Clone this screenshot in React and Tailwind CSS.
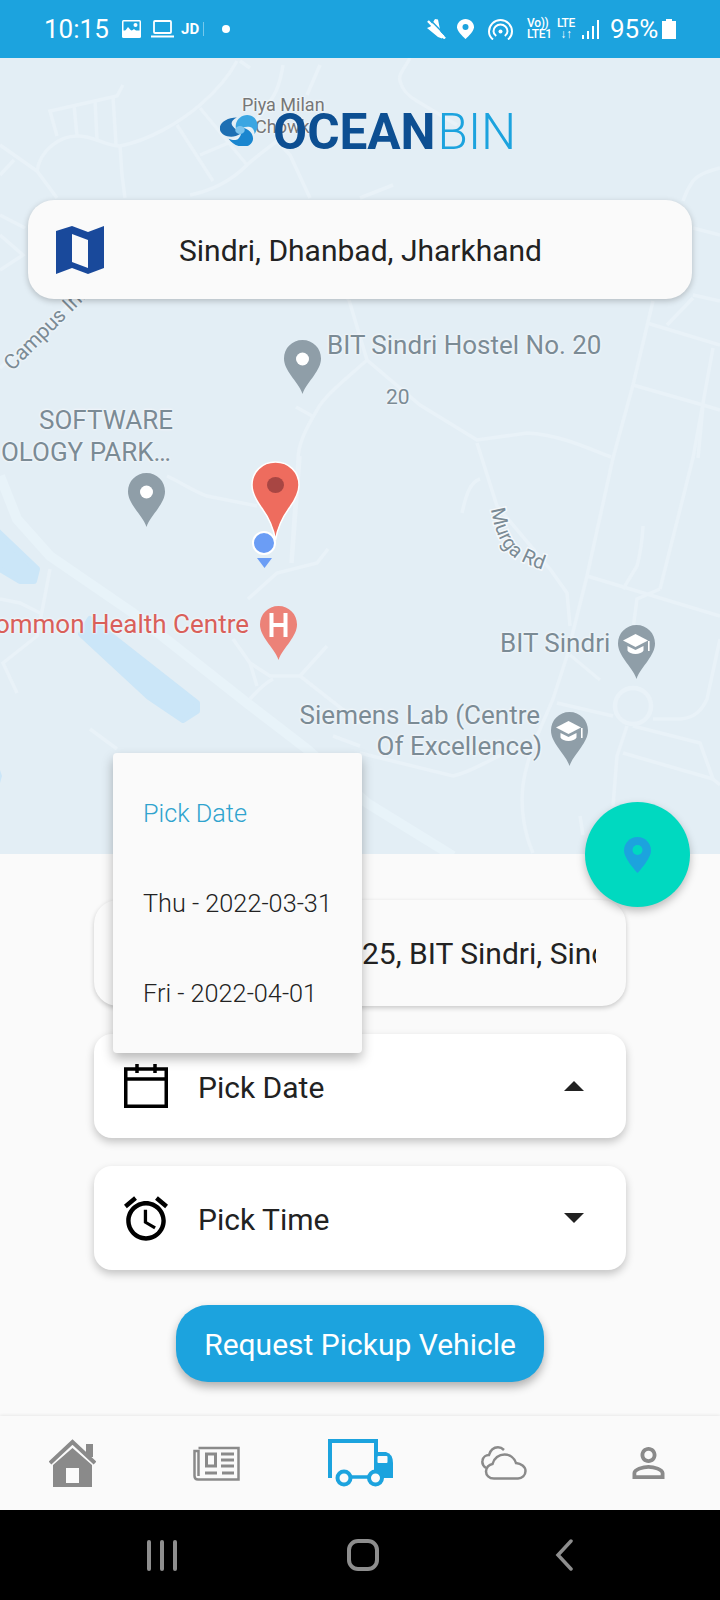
const halo = '[text-shadow:0_0_2px_#f4f8fb,0_0_2px_#f4f8fb,0_0_3px_#f4f8fb]';

function Pin({ className, children, fill = '#8f9ea8' }) {
    return (
        <svg viewBox="0 0 37 54" className={className}>
            <path
                fill={fill}
                d="M18.5 0C8 0 0 8.2 0 18.5c0 6 3 11 7 17 4 6 9 11 11.5 18.5 2.5-7.5 7.5-12.5 11.5-18.5 4-6 7-11 7-17C37 8.2 29 0 18.5 0z"
            />
            {children}
        </svg>
    );
}

function GradCap() {
    return (
        <g fill="#fff">
            <path d="M17.5 9 L5 15.5 L17.5 22 L30 15.5 Z" />
            <path d="M9.5 21v4.5c2 4.5 14 4.5 16 0V21l-8 4z" />
            <rect x="30" y="16" width="1.6" height="10" />
        </g>
    );
}

function MapRoads() {
    const roads = [
        'M0 145L37 171L57 198',
        'M0 175L14 160',
        'M37 171C40 150 60 136 77 136C95 136 105 146 120 146C150 140 180 122 200 105C215 92 228 78 237 61',
        'M57 136L50 111L77 105L117 96L123 85',
        'M74 105L77 136M95 100L97 140M113 97L116 144',
        'M120 146L122 175L125 198',
        'M177 125L213 181',
        'M200 108L247 165',
        'M200 155L240 138',
        'M190 195C215 190 232 180 247 165C258 155 268 148 277 141L290 155L310 198',
        'M240 61L250 68',
        'M283 65C280 85 275 95 270 101C262 115 250 128 243 135',
        'M320 65L307 95',
        'M410 58C405 68 398 74 400 81C403 92 410 97 417 101L457 125',
        'M360 198L393 185',
        'M720 168C705 172 698 175 693 181C688 188 685 195 683 201',
        'M693 228L720 235M693 295L720 301',
        'M653 301L633 385L613 458L587 576L567 656L553 699C540 730 527 755 523 785C520 810 525 835 533 853',
        'M693 298L667 325',
        'M647 323L720 345',
        'M713 348L693 458L660 589',
        'M633 385L703 405L720 410',
        'M703 405L698 458',
        'M349 300L367 360L420 405L477 440L527 433C560 435 585 447 611 457',
        'M367 360C345 380 325 395 317 410C305 430 298 445 298 460L291 563',
        'M296 407L314 417',
        'M477 443L497 506L550 569L567 593L570 626',
        'M480 479C470 482 466 495 462 513',
        'M587 576L720 616',
        'M643 526C642 545 640 555 637 566L623 589',
        'M660 589L637 599L633 629',
        'M557 703L613 716',
        'M653 719H680C695 718 702 710 707 699L720 639',
        'M627 726L617 756L613 806',
        'M633 726L700 743L713 779L720 785',
        'M623 753L713 779',
        'M360 753L453 776C470 772 480 765 493 759C505 752 515 750 520 748',
        'M580 816L583 835',
        'M233 639L250 663L257 686',
        'M250 663L270 676H300L327 646',
        'M250 699C258 690 265 683 273 679',
        'M300 676L360 723',
        'M333 736L360 746',
        'M0 599L20 603L40 613',
        'M50 569L43 606L37 636L3 663L17 693',
        'M167 476C180 482 195 492 207 496L257 506',
        'M300 456L292 563',
        'M328 549L317 563L277 573L248 599',
        'M90 729L117 749',
        'M0 235L23 255L0 270',
        'M0 368L20 350L77 298',
        'M25 228L0 215',
        'M349 300L340 290',
        'M570 655L600 680',
    ];

    return (
        <svg viewBox="0 58 720 796" className="absolute inset-0 h-full w-full">
            <g fill="#cbe6f8" stroke="#cbe6f8" strokeWidth="6" strokeLinejoin="round">
                <path d="M-5 529L37 569L34 581L20 581L-5 566Z" />
                <path d="M81 634L90 619L197 703L197 711L183 720L149 697Z" />
            </g>
            <path fill="#cbe6f8" d="M0 770L2 776L0 783Z" />
            <path
                d="M0 476L17 519L50 556L133 613L247 703L307 749L367 803L453 856"
                fill="none"
                stroke="#e8f3f9"
                strokeWidth="10"
            />
            <circle cx="633" cy="706" r="18" fill="none" stroke="#e9f2f8" strokeWidth="4.500" />
            {roads.map((d) => (
                <path key={d} d={d} fill="none" stroke="#e9f2f8" strokeWidth="3.500" />
            ))}
            <path id="murga" d="M491 509C495 533 503 554 521 561C531 566 541 570 552 572" fill="none" />
            <text
                fontFamily="Roboto, sans-serif"
                fontSize="20"
                fill="#7b8b95"
                stroke="#f4f8fb"
                strokeWidth="3"
                paintOrder="stroke"
            >
                <textPath href="#murga">Murga Rd</textPath>
            </text>
        </svg>
    );
}

function MapLabels() {
    const label = `absolute whitespace-nowrap text-[26px] leading-[30px] text-[#7b8b95] ${halo}`;

    return (
        <>
            <span className={`absolute left-[242px] top-[36px] whitespace-nowrap text-[18px] leading-[22px] text-[#777] ${halo}`}>
                Piya Milan
            </span>
            <span className={`absolute left-[255px] top-[58px] whitespace-nowrap text-[18px] leading-[22px] text-[#777] ${halo}`}>
                Chowk
            </span>
            <span className={`absolute left-[-9px] top-[257px] -rotate-45 whitespace-nowrap text-[21px] leading-[24px] text-[#7b8b95] ${halo}`}>
                Campus Inn
            </span>
            <span className={`${label} left-[327px] top-[272px]`}>BIT Sindri Hostel No. 20</span>
            <span className={`absolute left-[386px] top-[327px] text-[21px] leading-[24px] text-[#7b8b95] ${halo}`}>20</span>
            <span className={`${label} left-[39px] top-[347px]`}>SOFTWARE</span>
            <span className={`${label} right-[549px] top-[379px]`}>OLOGY PARK…</span>
            <span className={`absolute right-[471px] top-[551px] whitespace-nowrap text-[26px] leading-[30px] text-[#d9605a] ${halo}`}>
                Common Health Centre
            </span>
            <span className={`${label} left-[500px] top-[570px]`}>BIT Sindri</span>
            <span className={`${label} right-[180px] top-[642px]`}>Siemens Lab (Centre</span>
            <span className={`${label} right-[178px] top-[673px]`}>Of Excellence)</span>

            <Pin className="absolute left-[284px] top-[282px] h-[54px] w-[37px]">
                <circle cx="18.5" cy="19" r="6.5" fill="#fff" />
            </Pin>
            <Pin className="absolute left-[128px] top-[415px] h-[54px] w-[37px]">
                <circle cx="18.5" cy="19" r="6.5" fill="#fff" />
            </Pin>
            <Pin fill="#ec8278" className="absolute left-[260px] top-[548px] h-[54px] w-[37px]">
                <path fill="#fff" d="M9.500 7h4v10h10V7h4v24h-4V21h-10v10h-4z" />
            </Pin>
            <Pin className="absolute left-[618px] top-[567px] h-[54px] w-[37px]">
                <GradCap />
            </Pin>
            <Pin className="absolute left-[551px] top-[654px] h-[54px] w-[37px]">
                <GradCap />
            </Pin>

            {/* marker yang dipilih + posisi user */}
            <svg viewBox="0 0 49 80" className="absolute left-[251px] top-[403px] h-[80px] w-[49px]">
                <path
                    fill="#ee6c5e"
                    stroke="#fff"
                    strokeWidth="1.500"
                    d="M24.500 1C11 1 1 11 1 24c0 8 4 15 9 22 6 8 12 18 14.500 33 2.500-15 8.500-25 14.500-33 5-7 9-14 9-22C48 11 38 1 24.500 1z"
                />
                <ellipse cx="24.500" cy="24" rx="8.500" ry="8" fill="#a84643" />
            </svg>
            <span className="absolute left-[252px] top-[473px] h-6 w-6 rounded-full border-2 border-white bg-[#6b9df5]" />
            <svg viewBox="0 0 15 10" className="absolute left-[257px] top-[500px] h-[10px] w-[15px]">
                <path d="M0 0H15L7.500 10Z" fill="#6b9df5" />
            </svg>
        </>
    );
}

function OceanLogo() {
    const arm = 'M2 2C-3 0-7-3-8-8-8.500-11-6-14-2-16-12-17-21-11-21-3-21 5-12 9-5 7-1 6 1 4 2 2Z';

    return (
        <svg viewBox="-21 -20 42 40" preserveAspectRatio="none" className="h-[32px] w-10">
            <path fill="#1d6fb3" d={arm} transform="rotate(-5)" />
            <path fill="#3aa6e2" d={arm} transform="rotate(115)" />
            <path fill="#1a86cf" d={arm} transform="rotate(235)" />
            <circle r="5" fill="#7cc4ee" />
        </svg>
    );
}

function StatusBar() {
    return (
        <div className="flex h-[58px] items-center justify-between bg-[#1ca3de] pl-[44px] pr-[44px] text-white">
            <div className="flex items-center">
                <span className="w-[65px] text-[26px] leading-none">10:15</span>
                <svg viewBox="0 0 19 18" className="ml-[13px] h-[18px] w-[19px]">
                    <rect width="19" height="18" rx="1.500" fill="#fff" />
                    <rect x="1.500" y="1.500" width="16" height="9" fill="#1ca3de" />
                    <circle cx="13.500" cy="5" r="2" fill="#fff" />
                    <path d="M1.500 13L6 7l3.500 4L12 9l5.500 5v2.500h-16z" fill="#fff" />
                </svg>
                <svg viewBox="0 0 23 18" className="ml-[10px] h-[18px] w-[23px]">
                    <rect x="3" y="1" width="17" height="12" rx="1" fill="none" stroke="#fff" strokeWidth="1.800" />
                    <rect y="15.500" width="23" height="2" fill="#fff" />
                </svg>
                <span className="ml-[7px] w-5 text-[15px] font-bold leading-none">JD</span>
                <span className="ml-[2px] h-[14px] w-px bg-white/40" />
                <span className="ml-[18px] h-2 w-2 rounded-full bg-white" />
            </div>
            <div className="flex items-center">
                <svg viewBox="0 0 19 20" className="h-5 w-[19px]">
                    <path fill="#fff" d="M8 0L11 .5 13.500 13l4 4-2.500 2.500L11 18 0 9l3.500-1.500z" />
                    <path d="M1 2L18 19.500" stroke="#fff" strokeWidth="2.500" />
                    <path d="M3.200 .8L19.500 17.500" stroke="#1ca3de" strokeWidth="1.500" />
                </svg>
                <svg viewBox="0 0 17 20" className="ml-[11px] h-5 w-[17px]">
                    <path fill="#fff" d="M8.500 0C3.800 0 0 3.700 0 8.300 0 13 8.500 20 8.500 20S17 13 17 8.300C17 3.700 13.200 0 8.500 0z" />
                    <circle cx="8.500" cy="8" r="3" fill="#1ca3de" />
                </svg>
                <svg viewBox="0 0 25 21" className="ml-[14px] h-[21px] w-[25px]" fill="none" stroke="#fff" strokeWidth="2">
                    <path d="M5 20.500C2.500 18.500 1 15.500 1 12.500 1 6.200 6.200 1 12.500 1S24 6.200 24 12.500c0 3-1.500 6-4 8" />
                    <path d="M8.200 17C6.500 15.800 5.500 14 5.500 12.200 5.500 8.500 8.700 5.500 12.500 5.500s7 3 7 6.700c0 1.800-1 3.600-2.700 4.800" />
                    <circle cx="12.500" cy="12.500" r="2" fill="#fff" stroke="none" />
                </svg>
                <div className="ml-[14px] flex w-6 flex-col text-[12px] font-medium leading-[11px] tracking-tight">
                    <span>Vo))</span>
                    <span>LTE1</span>
                </div>
                <div className="ml-[5px] flex w-5 flex-col items-center text-[12px] font-medium leading-[11px] tracking-tight">
                    <span>LTE</span>
                    <span className="font-bold">↓↑</span>
                </div>
                <svg viewBox="0 0 18 19" className="ml-[6px] h-[19px] w-[18px]" fill="#fff">
                    <rect x="0" y="15" width="2" height="4" />
                    <rect x="5" y="11" width="2" height="8" />
                    <rect x="10" y="6" width="2" height="13" />
                    <rect x="15" y="0" width="2" height="19" />
                </svg>
                <span className="ml-[10px] w-[47px] text-[26px] leading-none">95%</span>
                <svg viewBox="0 0 14 20" className="ml-[5px] h-5 w-[14px]" fill="#fff">
                    <rect x="4" width="6" height="2" />
                    <rect y="2" width="14" height="18" />
                </svg>
            </div>
        </div>
    );
}

function Dropdown({ label, open, icon }) {
    return (
        <div className="flex h-[104px] w-[532px] items-center rounded-[18px] bg-white pl-[30px] pr-[42px] shadow-[0_4px_8px_rgba(0,0,0,0.22)]">
            {icon}
            <span className="ml-[30px] mt-1 flex-1 text-[30px] leading-none text-[#222]">{label}</span>
            <svg viewBox="0 0 20 10" className="h-[10px] w-5" fill="#222">
                <path d={open ? 'M10 0L20 10H0Z' : 'M0 0H20L10 10Z'} />
            </svg>
        </div>
    );
}

function BottomNav() {
    return (
        <div className="relative grid h-[94px] grid-cols-5 items-center bg-[#fafafa] shadow-[0_-1px_3px_rgba(0,0,0,0.07)]">
            <div className="flex justify-center">
                <svg viewBox="0 0 47 48" className="h-12 w-[47px]">
                    <path d="M1 24L23.500 3L46 24" fill="none" stroke="#8a8a8a" strokeWidth="4" />
                    <rect x="37" y="5" width="7" height="13" fill="#8a8a8a" />
                    <path fillRule="evenodd" fill="#8a8a8a" d="M4 26L23.500 9L43 26V48H4ZM17 29V44H30V29Z" />
                </svg>
            </div>
            <div className="flex justify-center">
                <svg viewBox="0 0 47 36" className="h-9 w-[47px]" fill="none" stroke="#8a8a8a">
                    <path d="M5.500 3H45.500V34.500H5C2.500 34.500 1.500 33 1.500 31V6H5.500V31" strokeWidth="2.500" />
                    <rect x="13.500" y="9" width="9" height="12" strokeWidth="3" />
                    <path d="M28 9H41M28 15H41M28 21H41M12 28H24M29 28H41" strokeWidth="3" />
                </svg>
            </div>
            <div className="flex justify-center">
                <svg viewBox="0 0 65 48" className="h-12 w-[65px]">
                    <path d="M2 39V2H48V39" fill="none" stroke="#1ca3de" strokeWidth="4" />
                    <path d="M48 13H58Q65 15 65 24V39H48Z" fill="#1ca3de" />
                    <rect x="49.500" y="17" width="10" height="7" rx="1" fill="#fafafa" />
                    <path d="M16 38H47" stroke="#1ca3de" strokeWidth="3.500" />
                    <circle cx="16" cy="39" r="6.500" fill="#fafafa" stroke="#1ca3de" strokeWidth="4" />
                    <circle cx="47.500" cy="39" r="6.500" fill="#fafafa" stroke="#1ca3de" strokeWidth="4" />
                </svg>
            </div>
            <div className="flex justify-center">
                <svg viewBox="0 0 46 34" className="h-[34px] w-[46px]" fill="none" stroke="#8a8a8a" strokeWidth="2.500">
                    <path d="M13 32.500C8 32.500 5 29 5 25.500 5 21.500 8 18.500 11.500 18 13 12 18 8.500 23.500 8.500 29 8.500 33.500 12 35 17 40 17.500 44.500 20.500 44.500 25 44.500 29.500 41 32.500 37 32.500Z" />
                    <path d="M5 22C2 20 1 17 1.500 14.500 2 11 5 9 8 9 9.500 4 13 1.300 17 1.300 19.500 1.300 21.500 2.500 23 4" />
                </svg>
            </div>
            <div className="flex justify-center">
                <svg viewBox="4 4 16 16" className="h-8 w-[33px]" fill="#8a8a8a">
                    <path d="M12 5.900c1.160 0 2.100.94 2.100 2.100s-.94 2.100-2.100 2.100S9.900 9.160 9.900 8s.94-2.100 2.100-2.100m0 9c2.970 0 6.100 1.460 6.100 2.100v1.100H5.900V17c0-.64 3.130-2.100 6.100-2.100M12 4C9.790 4 8 5.790 8 8s1.790 4 4 4 4-1.790 4-4-1.790-4-4-4zm0 9c-2.670 0-8 1.340-8 4v3h16v-3c0-2.660-5.330-4-8-4z" />
                </svg>
            </div>
        </div>
    );
}

export default function App() {
    return (
        <div className="relative flex h-[1600px] w-[720px] flex-col overflow-hidden bg-[#fafafa] font-['Roboto',sans-serif]">
            <StatusBar />

            {/* Peta */}
            <div className="relative h-[796px] bg-[#e3eef5]">
                <MapRoads />
                <MapLabels />
                <div className="relative flex flex-col">
                    <div className="ml-[220px] mt-[54px] flex h-[36px] items-center">
                        <OceanLogo />
                        <span className="ml-[13px] mt-[6px] text-[49.500px] font-bold leading-none text-[#0d4f92]">OCEAN</span>
                        <span className="ml-[2px] mt-[6px] text-[49.500px] font-light leading-none text-[#1ca3de]">BIN</span>
                    </div>
                    <div className="mx-[28px] mt-[52px] flex h-[99px] items-center rounded-[26px] bg-[#fafafa] pl-[28px] shadow-[0_2px_6px_rgba(0,0,0,0.22)]">
                        <svg viewBox="0 0 48 48" className="h-12 w-12">
                            <path
                                fill="#19499b"
                                fillRule="evenodd"
                                d="M0 5L16 0L32 6L48 0V42L32 48L16 42L0 48ZM16 8V36L32 42V14Z"
                            />
                        </svg>
                        <span className="ml-[75px] mt-[2px] text-[30px] leading-none text-[#222]">Sindri, Dhanbad, Jharkhand</span>
                    </div>
                </div>
            </div>

            {/* Form pickup */}
            <div className="flex flex-1 flex-col items-center pt-[46px]">
                <div className="flex h-[106px] w-[532px] items-center rounded-[24px] bg-[#fafafa] pl-[268px] pr-[30px] shadow-[0_2px_5px_rgba(0,0,0,0.2)]">
                    <span className="mt-[2px] overflow-hidden whitespace-nowrap text-[30px] leading-[40px] text-[#222]">
                        25, BIT Sindri, Sindri, Dhanbad
                    </span>
                </div>
                <div className="mt-7 flex flex-col gap-7">
                    <Dropdown
                        label="Pick Date"
                        open
                        icon={
                            <svg viewBox="0 0 44 44" className="h-11 w-11" fill="none" stroke="#000" strokeWidth="3.500">
                                <rect x="1.750" y="5" width="40.500" height="37.250" />
                                <path d="M1.750 15H42.250" />
                                <path d="M13 0V9M31 0V9" />
                            </svg>
                        }
                    />
                    <Dropdown
                        label="Pick Time"
                        icon={
                            <svg viewBox="2 1.860 20 20.140" className="h-[45px] w-11" fill="#000">
                                <path d="M22 5.720l-4.600-3.860-1.290 1.530 4.600 3.860L22 5.720zM7.880 3.390L6.600 1.860 2 5.710l1.290 1.530 4.590-3.850zM12.500 8H11v6l4.750 2.850.75-1.230-4-2.370V8zM12 4c-4.970 0-9 4.030-9 9s4.030 9 9 9 9-4.030 9-9-4.030-9-9-9zm0 16c-3.870 0-7-3.130-7-7s3.130-7 7-7 7 3.130 7 7-3.130 7-7 7z" />
                            </svg>
                        }
                    />
                </div>
                <button className="mt-[35px] h-[77px] w-[368px] rounded-[32px] bg-[#1ca3de] pt-[2px] text-[30px] text-white shadow-[0_5px_10px_rgba(0,0,0,0.3)]">
                    Request Pickup Vehicle
                </button>
            </div>

            <BottomNav />

            {/* Tombol navigasi android */}
            <div className="grid h-[90px] grid-cols-3 items-center bg-black pl-[62px] pr-[56px]">
                <div className="flex justify-center gap-[9px]">
                    <span className="h-[31px] w-1 rounded-full bg-[#8e8e8e]" />
                    <span className="h-[31px] w-1 rounded-full bg-[#8e8e8e]" />
                    <span className="h-[31px] w-1 rounded-full bg-[#8e8e8e]" />
                </div>
                <div className="flex justify-center">
                    <span className="h-8 w-8 rounded-[11px] border-4 border-[#8e8e8e]" />
                </div>
                <div className="flex justify-center">
                    <svg viewBox="0 0 18 32" className="h-8 w-[18px]" fill="none" stroke="#8e8e8e" strokeWidth="3.500" strokeLinecap="round">
                        <path d="M16 2L3 16L16 30" />
                    </svg>
                </div>
            </div>

            {/* Menu dropdown tanggal */}
            <div className="absolute left-[113px] top-[753px] flex h-[300px] w-[249px] flex-col justify-center rounded bg-[#fafafa] pl-[30px] pt-[2px] font-light shadow-[0_6px_12px_rgba(0,0,0,0.28)]">
                <span className="flex h-[90px] items-center text-[25.250px] text-[#2fa3ce]">Pick Date</span>
                <span className="flex h-[90px] items-center text-[25.250px] text-[#222]">Thu - 2022-03-31</span>
                <span className="flex h-[90px] items-center text-[25.250px] text-[#222]">Fri - 2022-04-01</span>
            </div>

            {/* FAB lokasi */}
            <button className="absolute left-[585px] top-[802px] flex h-[105px] w-[105px] items-center justify-center rounded-full bg-[#00d9c0] shadow-[0_4px_8px_rgba(0,0,0,0.25)]">
                <svg viewBox="0 0 27 36" className="h-9 w-[27px]">
                    <path fill="#1ca3de" d="M13.500 0C6 0 0 6 0 13.500 0 22 13.500 36 13.500 36S27 22 27 13.500C27 6 21 0 13.500 0z" />
                    <circle cx="13.500" cy="13" r="5" fill="#00d9c0" />
                </svg>
            </button>
        </div>
    );
}
